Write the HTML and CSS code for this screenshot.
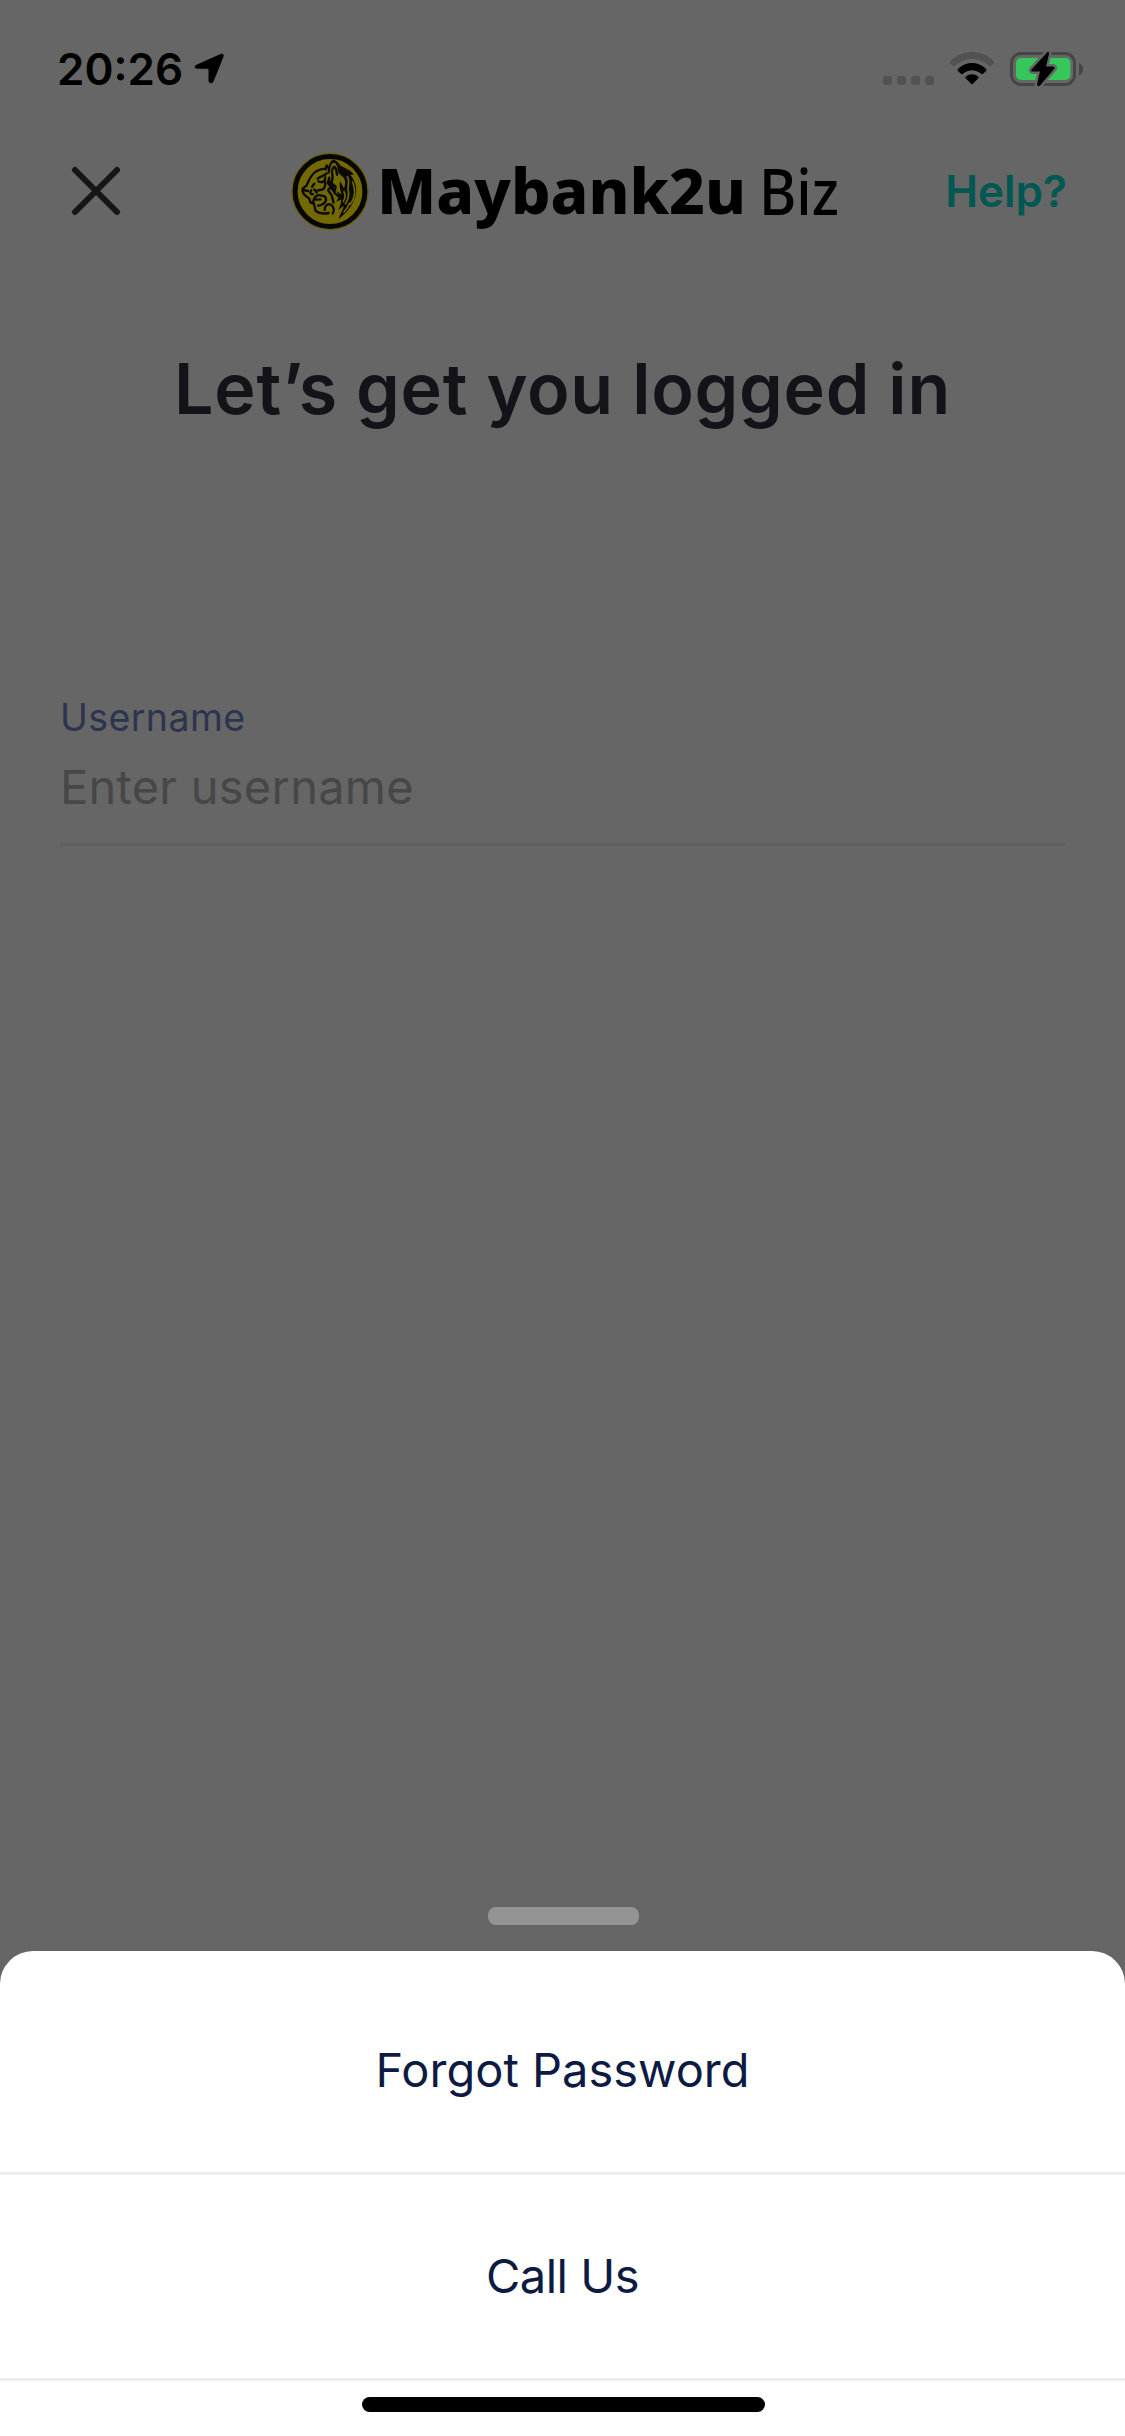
FILE: index.html
```html
<!DOCTYPE html>
<html lang="en">
<head>
<meta charset="utf-8">
<title>Maybank2u Biz</title>
<link rel="stylesheet" href="styles.css">
</head>
<body>
<div class="screen">
  <header class="status">
    <span class="time">20:26</span>
    <svg class="location" width="31" height="32" viewBox="0 0 31 32"><path d="M2.500 11.700 26.500 1c2-.9 4 .6 3 2.700L19.500 28.500c-1 2.500-5 2-5-.7V15.700H3.300c-3 0-3.300-3-.8-4z"/></svg>
    <svg class="signals" width="206" height="38" viewBox="0 0 206 38">
      <g fill="#525252"><rect x="3" y="26" width="9" height="9" rx="3"/><rect x="17" y="26" width="9" height="9" rx="3"/><rect x="31" y="26" width="9" height="9" rx="3"/><rect x="45" y="26" width="9" height="9" rx="3"/></g>
      <path fill="#525252" d="M70.200 11.200C82.500-1 101.500-1 113.800 11.200c.7.700.7 1.500 0 2.200l-2.600 2.500c-.7.700-1.400.6-2.100 0-9.700-9.200-24.500-9.200-34.200 0-.7.600-1.400.7-2.100 0l-2.600-2.500c-.7-.7-.7-1.500 0-2.200z"/>
      <path d="M78 18.800c8-7.600 20-7.600 28 0 .7.700.6 1.500 0 2.100l-2.900 2.900c-.7.700-1.300.6-2 0-5.300-4.800-12.900-4.800-18.200 0-.7.600-1.300.7-2 0L78 20.900c-.6-.6-.7-1.400 0-2.100zM86 26.500c3.500-2.900 8.500-2.900 12 0 .8.700.8 1.400.1 2.100l-5 5c-.7.700-1.500.7-2.200 0l-5-5c-.7-.7-.7-1.400.1-2.100z"/>
      <rect x="131.500" y="3.500" width="63" height="31" rx="9.500" fill="none" stroke="#464646" stroke-width="3"/>
      <rect x="136" y="8" width="54.500" height="22" rx="5" fill="#35c759"/>
      <path fill="#464646" d="M199 13c5.500 2 5.500 10.500 0 12.500z"/>
      <path stroke="#666" stroke-width="5" stroke-linejoin="round" d="M167.500 2 151.500 19.500Q150.500 21.500 152.500 21.500H160L157 34.500Q158 37.500 160 35.500L174.500 18.500Q175 16.500 173 16.500H166L169 4Q169 1 167.500 2z"/>
      <path d="M167.500 2 151.500 19.500Q150.500 21.500 152.500 21.500H160L157 34.500Q158 37.500 160 35.500L174.500 18.500Q175 16.500 173 16.500H166L169 4Q169 1 167.500 2z"/>
    </svg>
  </header>

  <nav class="nav">
    <svg class="close" width="54" height="54" viewBox="0 0 54 54"><path d="M6 6 48 48M48 6 6 48"/></svg>
    <svg class="logo" width="560" height="90" viewBox="0 0 560 90">
      <circle cx="45" cy="46.500" r="38.700" fill="#6b5f00"/>
      <circle cx="45" cy="46.500" r="34.900" fill="#746800" stroke="#060600" stroke-width="5"/>
      <!-- tiger head in profile, facing left -->
      <g transform="translate(-5 -5) scale(.33333)" fill="none" stroke="#0b0a00" stroke-width="7" stroke-linejoin="round" stroke-linecap="round">
        <path d="M138 88C130 84 112 90 102 99 90 110 84 126 80 136L68 146C64 154 70 158 73 164L80 170 88 176 91 187 102 192 107 213C118 221 132 222 146 219M136 88 140 76 146 84"/>
        <path d="M146 98C147 82 150 68 160 62 172 68 178 76 178 88M157 104C154 92 158 84 163 80 169 86 171 94 171 104"/>
        <path d="M113 116C120 108 130 110 140 100M115 124 126 127 135 120M136 112C130 128 142 132 132 145 128 151 120 149 113 151M103 131 96 140"/>
        <path d="M70 150 84 153M94 151C87 158 94 165 99 162M103 148 110 158"/>
        <path d="M100 189C99 170 114 162 124 167 139 167 142 180 133 189 125 194 123 198 114 197M107 179 122 178"/>
        <path d="M134 210C133 198 143 190 152 194 162 199 164 212 158 220"/>
        <path d="M148 113 143 129 153 140 144 150 155 166 161 188M158 108 155 130 167 140 163 158 174 168"/>
      </g>
      <g transform="translate(-5 -5) scale(.33333)" fill="#0b0a00">
        <path d="M167 64C180 82 203 82 222 103L211 105C246 146 226 199 176 237 180 221 190 209 191 197L174 211C180 199 184 190 183 179L168 185C177 176 177 164 169 151L184 164C182 150 177 142 180 123L192 145C197 131 197 121 189 111L176 100z"/>
        <path d="M149 116C157 131 166 138 162 159L151 147 154 138 145 131z"/>
      </g>
      <g transform="translate(-5 -5) scale(.33333)" fill="none" stroke="#746800" stroke-width="5" stroke-linecap="round" stroke-linejoin="round">
        <path d="M202 110C211 123 201 140 205 154 208 169 203 181 196 191M218 126C228 151 225 174 211 193M192 155C198 168 194 178 190 184M208 190C205 202 197 211 192 216"/>
      </g>
      <text class="brand" x="92" y="69" textLength="369" lengthAdjust="spacingAndGlyphs">Maybank2u</text>
      <text class="brand-biz" x="474" y="69.500" textLength="80" lengthAdjust="spacingAndGlyphs">Biz</text>
    </svg>
    <a class="help">Help?</a>
  </nav>

  <main class="login">
    <h1 class="title">Let’s get you logged in</h1>
    <div class="field">
      <label class="label">Username</label>
      <div class="input">Enter username</div>
    </div>
  </main>

  <div class="handle"></div>
  <section class="sheet">
    <div class="action forgot">Forgot Password</div>
    <div class="action call">Call Us</div>
    <div class="home"></div>
  </section>
</div>
</body>
</html>
```
FILE: styles.css
```css
* { box-sizing: border-box; }
body { margin: 0; background: #666; font-family: Inter, "Liberation Sans", sans-serif; }
svg { display: block; flex: none; overflow: visible; }
.screen { width: 1125px; height: 2436px; display: flex; flex-direction: column; }

.status { height: 132px; padding: 50px 39px 0 57px; display: flex; align-items: flex-start; }
.time { width: 137px; font: 600 44px/38px Inter, sans-serif; white-space: nowrap; }
.location { margin-top: 3px; }
.signals { margin-left: auto; }

.nav { height: 120px; padding: 0 58px 0 69px; display: flex; align-items: center; }
.close { margin-top: -2px; fill: none; stroke: #161616; stroke-width: 6; stroke-linecap: round; }
.logo { margin: -4px 0 0 162px; }
.brand { font: 800 63px "Noto Sans", sans-serif; }
.brand-biz { font: 500 63px "Noto Sans", sans-serif; }
.help { margin: -2px 0 0 auto; font: 600 44px/54px Inter, sans-serif; color: #005852; }

.title { margin: 89px 0 0; text-align: center; font-size: 70px; line-height: 96px; font-weight: 600; letter-spacing: 0.7px; color: #141319; white-space: nowrap; }
.field { margin: 253px 60px 0; border-bottom: 3px solid #5f5f5f; height: 156px; padding-top: 1px; }
.label { display: block; font-size: 37.500px; line-height: 54px; letter-spacing: 0.4px; color: #2d3450; }
.input { margin-top: 12px; font-size: 47px; line-height: 60px; letter-spacing: 0.25px; color: #474747; }

.handle { width: 151px; height: 18px; border-radius: 8px; background: #949494; margin: auto auto 26px 488px; flex: none; }
.sheet { height: 485px; flex: none; background: #fff; border-radius: 33px 33px 0 0; }
.action { display: flex; align-items: center; justify-content: center; border-bottom: 3px solid #eee; font-size: 47px; color: #0d1b42; }
.forgot { height: 224px; padding-top: 16px; }
.call { height: 206px; padding-bottom: 2px; letter-spacing: -0.5px; }
.home { width: 403px; height: 15px; border-radius: 8px; background: #000; margin: 16px 0 0 362px; }
```
